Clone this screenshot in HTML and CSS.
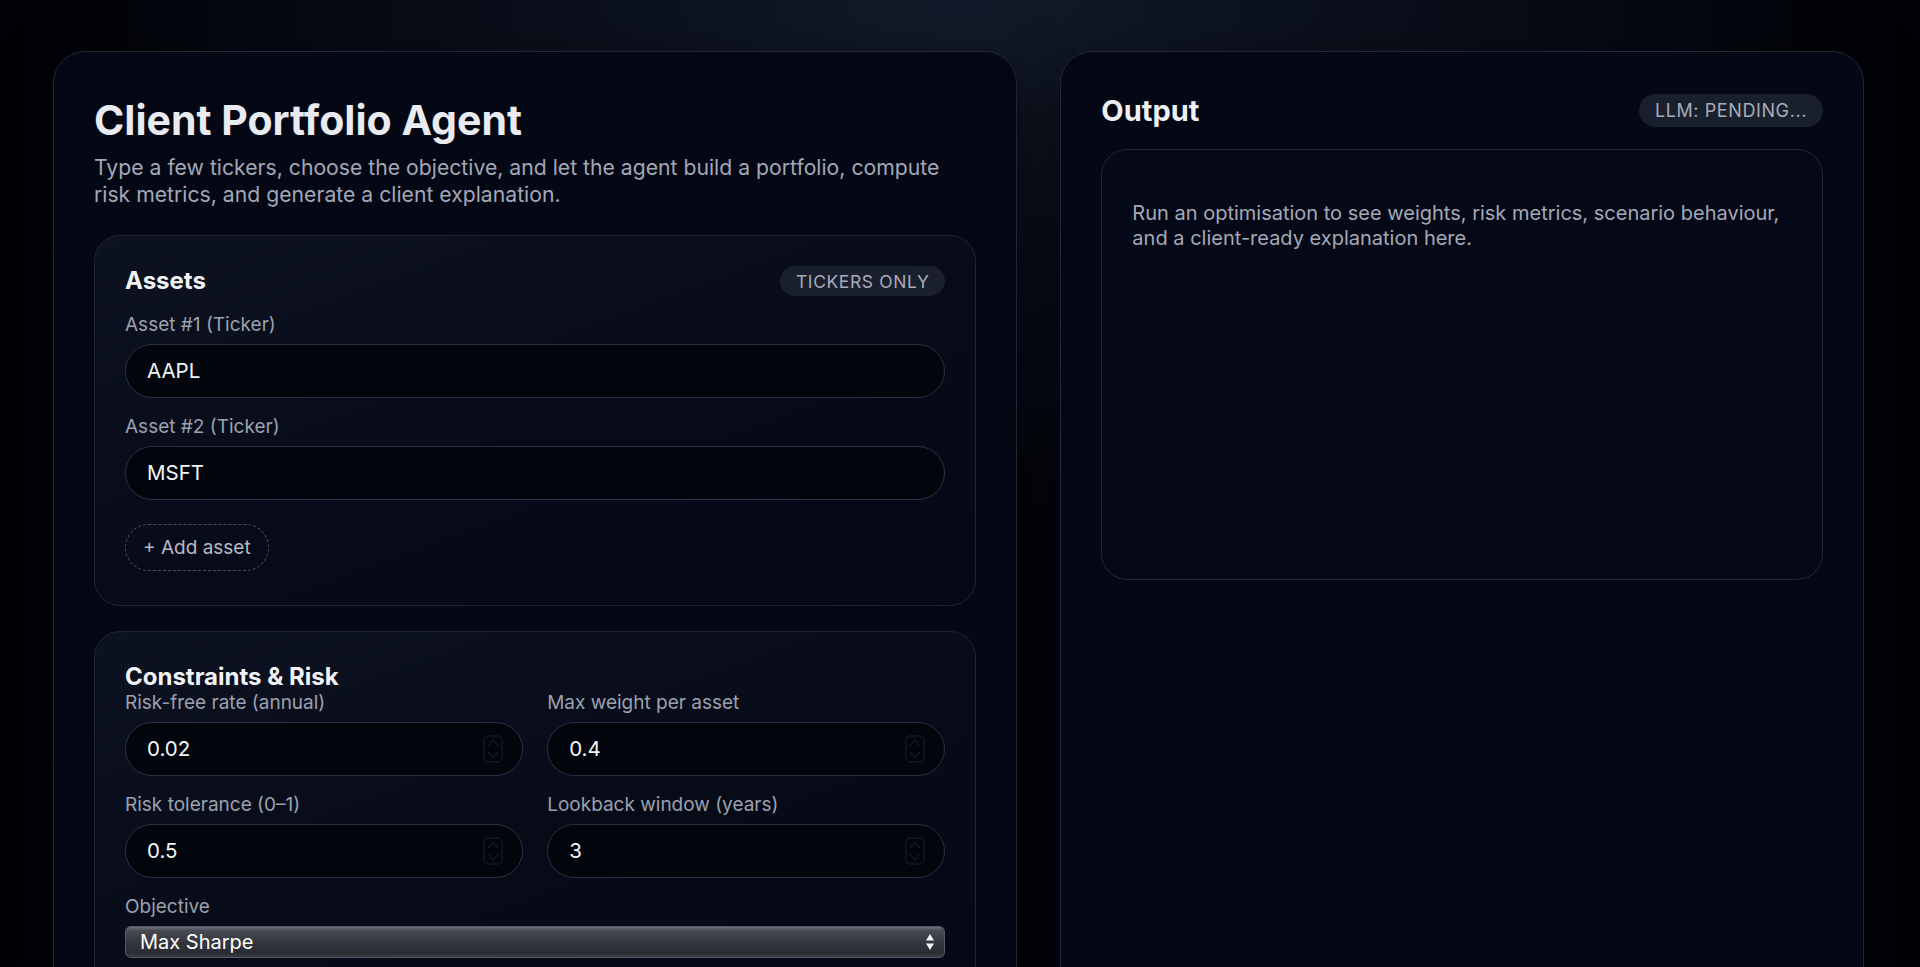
FILE: index.html
```html
<!DOCTYPE html>
<html lang="en">
<head>
<meta charset="utf-8">
<title>Client Portfolio Agent</title>
<link rel="stylesheet" href="styles.css">
</head>
<body>
<main class="layout">
  <section class="card">
    <h1 class="title">Client Portfolio Agent</h1>
    <p class="subtitle">Type a few tickers, choose the objective, and let the agent build a portfolio, compute risk metrics, and generate a client explanation.</p>

    <div class="subcard">
      <div class="subcard-head">
        <h2 class="section-title">Assets</h2>
        <span class="pill">Tickers only</span>
      </div>
      <div class="field">
        <label class="label">Asset #1 (Ticker)</label>
        <div class="input"><span class="value">AAPL</span></div>
      </div>
      <div class="field">
        <label class="label">Asset #2 (Ticker)</label>
        <div class="input"><span class="value">MSFT</span></div>
      </div>
      <button class="add-btn">+ Add asset</button>
    </div>

    <div class="subcard">
      <h2 class="section-title tight">Constraints &amp; Risk</h2>
      <div class="grid2">
        <div class="field">
          <label class="label">Risk-free rate (annual)</label>
          <div class="input"><span class="value">0.02</span>
            <svg class="spin" width="20" height="28" viewBox="0 0 20 28"><rect x="1" y="1" width="18" height="26" rx="4"/><path d="M5 10.5 L10 5.5 L15 10.5 M5 17.5 L10 22.5 L15 17.5"/></svg>
          </div>
        </div>
        <div class="field">
          <label class="label">Max weight per asset</label>
          <div class="input"><span class="value">0.4</span>
            <svg class="spin" width="20" height="28" viewBox="0 0 20 28"><rect x="1" y="1" width="18" height="26" rx="4"/><path d="M5 10.5 L10 5.5 L15 10.5 M5 17.5 L10 22.5 L15 17.5"/></svg>
          </div>
        </div>
        <div class="field">
          <label class="label">Risk tolerance (0–1)</label>
          <div class="input"><span class="value">0.5</span>
            <svg class="spin" width="20" height="28" viewBox="0 0 20 28"><rect x="1" y="1" width="18" height="26" rx="4"/><path d="M5 10.5 L10 5.5 L15 10.5 M5 17.5 L10 22.5 L15 17.5"/></svg>
          </div>
        </div>
        <div class="field">
          <label class="label">Lookback window (years)</label>
          <div class="input"><span class="value">3</span>
            <svg class="spin" width="20" height="28" viewBox="0 0 20 28"><rect x="1" y="1" width="18" height="26" rx="4"/><path d="M5 10.5 L10 5.5 L15 10.5 M5 17.5 L10 22.5 L15 17.5"/></svg>
          </div>
        </div>
      </div>
      <div class="field">
        <label class="label">Objective</label>
        <div class="select">
          <span class="select-text">Max Sharpe</span>
          <svg class="select-arrows" width="10" height="18" viewBox="0 0 10 18"><path d="M5 1 L9 7.5 L1 7.5 Z M5 17 L9 10.5 L1 10.5 Z"/></svg>
        </div>
      </div>
    </div>
  </section>

  <section class="card">
    <div class="output-head">
      <h2 class="output-title">Output</h2>
      <span class="pill pill-lg">LLM: pending...</span>
    </div>
    <div class="output-box">
      <p class="output-text">Run an optimisation to see weights, risk metrics, scenario behaviour, and a client-ready explanation here.</p>
    </div>
  </section>
</main>
</body>
</html>
```

FILE: styles.css
```css
html, body {
  margin: 0;
  height: 967px;
  overflow: hidden;
}

body {
  font-family: "Inter", "Liberation Sans", sans-serif;
  color: #e8eaf0;
  background:
    radial-gradient(ellipse 900px 520px at 50% 0%, #131b2a 0%, #0a0f1b 45%, rgba(3,5,11,0) 100%),
    linear-gradient(90deg, #010206 0%, #03050c 20%, #03050c 80%, #010206 100%);
  background-color: #03050c;
}

.layout {
  display: grid;
  grid-template-columns: 1.2fr 1fr;
  gap: 43px;
  padding: 51px 56px 0 53px;
}

.card {
  border: 1px solid #22283a;
  border-radius: 32px;
  background: #040714;
  padding: 40px 40px 60px;
  box-shadow: 0 20px 60px rgba(0, 0, 0, 0.55);
  min-height: 1000px;
  box-sizing: border-box;
}

.title {
  margin: 4px 0 10px;
  font-size: 41px;
  line-height: 48px;
  font-weight: 700;
  color: #e9ebf1;
}

.subtitle {
  margin: 0 0 27px;
  font-size: 21.2px;
  line-height: 27px;
  color: #a3a8b6;
}

.subcard {
  border: 1px solid #1f2536;
  border-radius: 26px;
  background: linear-gradient(160deg, #0d1221 0%, #070b18 55%, #050816 100%);
  padding: 30px 30px 34px;
  margin-bottom: 25px;
  display: flex;
  flex-direction: column;
  gap: 16px;
}

.subcard-head {
  display: flex;
  align-items: center;
  justify-content: space-between;
  height: 30px;
  margin-bottom: -0.5px;
}

.section-title {
  margin: 0;
  font-size: 24px;
  line-height: 28px;
  font-weight: 700;
  color: #f1f3f7;
}

.section-title.tight {
  margin: 1px 0 -17px;
}

.pill {
  display: inline-flex;
  align-items: center;
  height: 30px;
  padding: 0 16px;
  border-radius: 15px;
  background: #1a1f2d;
  color: #a7acb9;
  font-size: 17.5px;
  letter-spacing: 0.6px;
  text-transform: uppercase;
}

.pill-lg {
  height: 33px;
  border-radius: 17px;
  font-size: 18px;
  padding: 0 16px;
}

.field {
  display: flex;
  flex-direction: column;
}

.label {
  font-size: 19px;
  line-height: 25px;
  color: #9ba1ae;
  margin-bottom: 7px;
}

.input {
  display: flex;
  align-items: center;
  justify-content: space-between;
  height: 54px;
  box-sizing: border-box;
  border: 1px solid #2a3142;
  border-radius: 27px;
  background: #03050d;
  padding: 0 19px 0 21px;
}

.value {
  font-size: 20.5px;
  color: #f3f5f9;
}

.spin {
  fill: none;
  stroke: #141823;
  stroke-width: 1.3;
}

.add-btn {
  align-self: flex-start;
  margin-top: 8px;
  height: 47px;
  padding: 0 17px;
  border: 1.5px dashed #4a5162;
  border-radius: 24px;
  background: transparent;
  color: #b5bac5;
  font-family: inherit;
  font-size: 19px;
}

.grid2 {
  display: grid;
  grid-template-columns: 1fr 1fr;
  column-gap: 24px;
  row-gap: 16px;
}

.select {
  display: flex;
  align-items: center;
  justify-content: space-between;
  height: 32px;
  box-sizing: border-box;
  padding: 0 9px 0 14px;
  border: 1px solid #555963;
  border-radius: 6px;
  background: linear-gradient(to bottom, #6c7079 0%, #484b54 12%, #363941 45%, #2a2c33 85%, #3a3c43 100%);
}

.select-text {
  font-size: 20px;
  color: #ffffff;
}

.select-arrows {
  fill: #f2f3f5;
}

.output-head {
  display: flex;
  align-items: center;
  justify-content: space-between;
  height: 36px;
  margin-bottom: 21px;
}

.output-title {
  margin: 0;
  font-size: 29px;
  font-weight: 700;
  color: #eef0f4;
}

.output-box {
  border: 1px solid #22283a;
  border-radius: 26px;
  min-height: 431px;
  box-sizing: border-box;
  padding: 50.5px 30px 30px;
  background: #050816;
}

.output-text {
  margin: 0;
  font-size: 20px;
  line-height: 25.5px;
  color: #a4a9b6;
}
```
